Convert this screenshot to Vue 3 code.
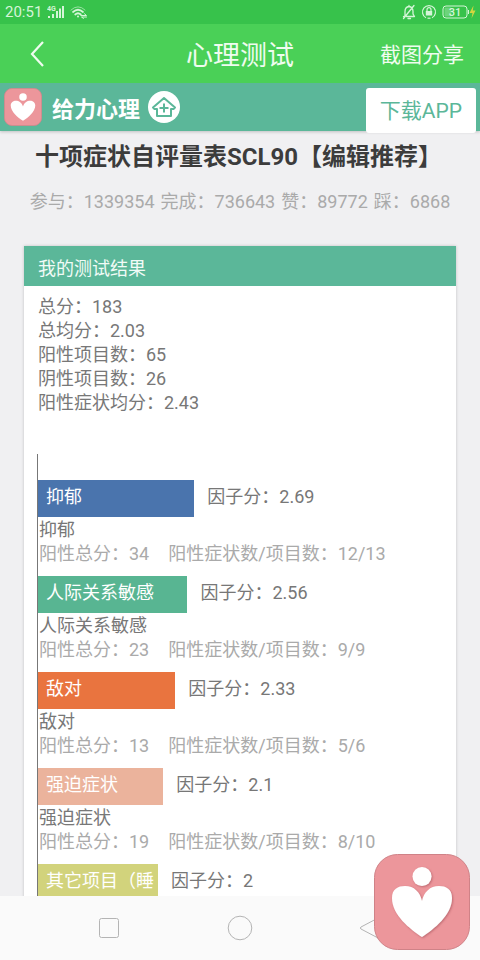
<script setup>
const stats = [
  ['参与', 1339354],
  ['完成', 736643],
  ['赞', 89772],
  ['踩', 6868],
]

const summary = [
  ['总分', '183'],
  ['总均分', '2.03'],
  ['阳性项目数', '65'],
  ['阴性项目数', '26'],
  ['阳性症状均分', '2.43'],
]

const factors = [
  { name: '抑郁', score: 2.69, total: 34, items: '12/13', tone: 'blue' },
  { name: '人际关系敏感', score: 2.56, total: 23, items: '9/9', tone: 'green' },
  { name: '敌对', score: 2.33, total: 13, items: '5/6', tone: 'orange' },
  { name: '强迫症状', score: 2.1, total: 19, items: '8/10', tone: 'peach' },
  { name: '其它项目（睡', score: 2, tone: 'olive' },
]

const barWidth = (score) => `calc(${score * 13}% + 15px)`
</script>

<template>
  <div class="screen">
    <div class="status">
      <div class="status-side">
        <span class="clock">20:51</span>
        <svg class="signal" viewBox="0 0 18 14" width="18" height="14">
          <text x="0" y="6" font-size="7" font-weight="700" fill="currentColor">4G</text>
          <g fill="currentColor">
            <rect x="1" y="11" width="2" height="2" />
            <rect x="5" y="9" width="2" height="4" />
            <rect x="9" y="6" width="2" height="7" />
            <rect x="12" y="3.500" width="2" height="9.500" />
            <rect x="15" y="1" width="2" height="12" />
          </g>
        </svg>
        <svg viewBox="0 0 18 14" width="18" height="14" fill="none" stroke="currentColor" stroke-linecap="round">
          <path d="M1 5Q8 -1.500 15 5" stroke-width="1" opacity=".6" />
          <path d="M3 7Q8 2.500 13 7" stroke-width="1.700" />
          <path d="M5.200 9.500Q8 7 10.800 9.500" stroke-width="1.700" />
          <circle cx="8" cy="11.600" r="1" fill="currentColor" stroke="none" />
          <path d="M11 10.500h5.500l-2-1.700M16.500 12h-5l2 1.400" stroke-width="1" />
        </svg>
      </div>
      <div class="status-side right">
        <svg viewBox="0 0 14 16" width="14" height="16" fill="none" stroke="currentColor" stroke-width="1.300" stroke-linecap="round" stroke-linejoin="round">
          <path d="M3 12V7.500Q3 3 7 2.500Q11 3 11 7.500V10L12.500 12.500H4.500M3 12L1.500 12.500M6 14.500h2.500M12 1.500L1.500 14.500M7 2.500V1.500" />
        </svg>
        <svg viewBox="0 0 16 16" width="16" height="16" fill="none" stroke="currentColor" stroke-width="1.200">
          <path d="M5 13.800A6.500 6.500 0 1 1 11 13.800" />
          <path d="M6 7V5.700a2 2 0 0 1 4 0V7" />
          <rect x="4.800" y="7" width="6.400" height="4.500" fill="currentColor" stroke="none" />
          <path d="M6.500 14.200h3" />
        </svg>
        <svg viewBox="0 0 34 16" width="34" height="16">
          <rect x="1" y="2" width="24" height="12" rx="3" fill="none" stroke="currentColor" />
          <rect x="2.500" y="3.500" width="7" height="9" rx="1" fill="currentColor" opacity=".35" />
          <path d="M26.500 6v4" stroke="currentColor" />
          <text x="13" y="11.800" font-size="11" font-weight="500" text-anchor="middle" fill="currentColor">31</text>
          <path d="M31.500 1.500L27.500 9H30.500L29.500 14.500L33.500 6.500H30.800Z" fill="#d3d63f" />
        </svg>
      </div>
    </div>

    <header class="nav">
      <button class="back" type="button" aria-label="返回">
        <svg viewBox="0 0 14 28" width="14" height="28" fill="none" stroke="currentColor" stroke-width="2.200">
          <path d="M13 2L2 14L13 26" />
        </svg>
      </button>
      <h1 class="nav-title">心理测试</h1>
      <button class="share" type="button">截图分享</button>
    </header>

    <main class="content">
      <div class="brand">
        <svg class="brand-logo" viewBox="0 0 96 96" width="38" height="38" aria-hidden="true">
          <rect x="1" y="1" width="94" height="94" rx="20" fill="#ec969b" stroke="#d9858b" stroke-width="2" />
          <circle cx="48" cy="23" r="9.500" fill="#fff" />
          <path d="M48 83C35 74 17 60 17 44C17 28 43 27 48 47C53 27 79 28 79 44C79 60 61 74 48 83Z" fill="#fff" />
        </svg>
        <span class="brand-name">给力心理</span>
        <a class="home" href="#" aria-label="首页">
          <svg viewBox="0 0 32 32" width="32" height="32">
            <circle cx="16" cy="16" r="16" fill="#fff" />
            <g fill="none" stroke="#5bb799" stroke-width="2">
              <path d="M5 16.500L16 7L27 16.500L25.500 18H23V25H9V18H6.500Z" stroke-linejoin="round" />
              <path d="M16 12.500v9M11.500 17h9" />
            </g>
          </svg>
        </a>
        <a class="download" href="#">下载APP</a>
      </div>

      <h2 class="title">十项症状自评量表SCL90【编辑推荐】</h2>
      <p class="stats">
        <span v-for="[label, value] in stats" :key="label">{{ label }}：{{ value }}</span>
      </p>

      <section class="card">
        <h3 class="card-head">我的测试结果</h3>
        <div class="card-body">
          <p v-for="[label, value] in summary" :key="label" class="line">{{ label }}：{{ value }}</p>
          <div class="chart">
            <div v-for="f in factors" :key="f.name" class="factor">
              <div class="bar-row">
                <div class="bar" :class="f.tone" :style="{ width: barWidth(f.score) }">{{ f.name }}</div>
                <span class="score">因子分：{{ f.score }}</span>
              </div>
              <template v-if="f.items">
                <p class="line">{{ f.name }}</p>
                <p class="line detail">
                  <span>阳性总分：{{ f.total }}</span>
                  <span>阳性症状数/项目数：{{ f.items }}</span>
                </p>
              </template>
            </div>
          </div>
        </div>
      </section>
    </main>

    <footer class="system">
      <button type="button" aria-label="最近任务">
        <svg viewBox="0 0 26 26" width="26" height="26"><rect x="3.500" y="3.500" width="19" height="19" rx="2" /></svg>
      </button>
      <button type="button" aria-label="主页">
        <svg viewBox="0 0 26 26" width="26" height="26"><circle cx="13" cy="13" r="11.800" /></svg>
      </button>
      <button type="button" aria-label="后退">
        <svg viewBox="0 0 26 26" width="26" height="26"><path d="M21 2.500L3 12Q1.500 13 3 14L21 23.500Z" /></svg>
      </button>
    </footer>

    <button class="float" type="button" aria-label="给力心理">
      <svg viewBox="0 0 96 96" width="96" height="96">
        <defs>
          <filter id="soft" x="-20%" y="-20%" width="140%" height="140%">
            <feDropShadow dx="1" dy="1" stdDeviation="1" flood-color="#a04c55" flood-opacity=".6" />
          </filter>
        </defs>
        <rect x=".5" y=".5" width="95" height="95" rx="23" fill="#ec969b" stroke="#cf8287" />
        <g fill="#fff" filter="url(#soft)">
          <circle cx="48" cy="22.500" r="9.500" />
          <path d="M48 83C36 75 18 61 18 44C18 35 24 32 31 32C40 32 46 38 48 47C50 38 56 32 65 32C72 32 78 35 78 44C78 61 60 75 48 83Z" />
        </g>
      </svg>
    </button>
  </div>
</template>

<style>
body {
  margin: 0;
}
</style>

<style scoped>
.screen {
  position: relative;
  display: flex;
  flex-direction: column;
  height: 100vh;
  overflow: hidden;
  background: #f0f0f2;
  color: #777;
  font-family: Roboto, "Noto Sans CJK SC", sans-serif;
  font-size: 18px;
  line-height: 24px;
}
h1, h2, h3, p {
  margin: 0;
  font-weight: 400;
}
button {
  padding: 0;
  border: 0;
  background: none;
  color: inherit;
  font: inherit;
}
a {
  text-decoration: none;
}
svg {
  display: block;
}
.status {
  display: flex;
  justify-content: space-between;
  flex: none;
  height: 24px;
  padding: 0 0 0 5px;
  background: #37c24b;
  color: #d5f5d8;
}
.status-side {
  display: flex;
  align-items: center;
  gap: 5px;
}
.status-side.right {
  padding-right: 5px;
  margin-right: -1px;
}
.clock {
  font-size: 15px;
}
.nav {
  display: grid;
  grid-template-columns: 1fr auto 1fr;
  align-items: center;
  flex: none;
  height: 59px;
  padding: 0 16px 0 30px;
  background: #4ad057;
  color: #effcef;
}
.back {
  justify-self: start;
}
.nav-title {
  padding: 5px 14px 0 0;
  font-size: 27px;
  line-height: 36px;
}
.share {
  justify-self: end;
  padding-top: 3px;
  font-size: 21px;
}
.content {
  flex: 1;
  min-height: 0;
  overflow: hidden;
}
.brand {
  display: flex;
  align-items: center;
  height: 48px;
  padding: 0 4px;
  background: #5bb799;
  box-shadow: 0 1px 3px rgba(0, 0, 0, 0.2);
}
.brand-name {
  padding: 6px 8px 0 10px;
  color: #fff;
  font-size: 22px;
  font-weight: 700;
}
.download {
  align-self: flex-start;
  margin: 5px 0 0 auto;
  padding: 1px 14px 0;
  border-radius: 3px;
  background: #fff;
  color: #5bb799;
  font-size: 21px;
  line-height: 44px;
}
.title {
  margin-top: 8px;
  padding-right: 3px;
  color: #3c3c3c;
  font-size: 24px;
  font-weight: 700;
  line-height: 36px;
  text-align: center;
  white-space: nowrap;
}
.stats {
  display: flex;
  justify-content: center;
  gap: 6px;
  margin-top: 15px;
  color: #aaa;
  white-space: nowrap;
}
.card {
  margin: 32px 24px 0;
  background: #fff;
  box-shadow: 0 0 3px rgba(0, 0, 0, 0.2);
}
.card-head {
  padding: 5px 14px 0;
  background: #5bb799;
  color: #f1fbf7;
  font-size: 18px;
  line-height: 35px;
}
.card-body {
  padding: 9px 14px 0 13px;
}
.line {
  padding-left: 1px;
}
.chart {
  margin-top: 39px;
  padding-top: 26px;
  border-left: 1px solid #777;
}
.factor {
  padding-bottom: 10px;
}
.bar-row {
  display: flex;
  gap: 13px;
  padding-bottom: 1px;
}
.bar {
  box-sizing: border-box;
  flex: none;
  height: 37px;
  padding: 5px 0 0 8px;
  overflow: hidden;
  color: #fff;
  white-space: nowrap;
}
.blue { background: #4a74ad; }
.green { background: #58b592; }
.orange { background: #e9743f; }
.peach { background: #ebb39c; }
.olive { background: #d2d37c; }
.score {
  padding-top: 5px;
}
.detail {
  display: flex;
  gap: 19px;
  color: #aaa;
}
.system {
  display: flex;
  justify-content: center;
  align-items: center;
  gap: 105px;
  flex: none;
  height: 64px;
  background: #fafafa;
}
.system svg {
  fill: none;
  stroke: #b4b4b4;
  stroke-width: 1;
}
.float {
  position: absolute;
  right: 10px;
  bottom: 10px;
}
</style>
